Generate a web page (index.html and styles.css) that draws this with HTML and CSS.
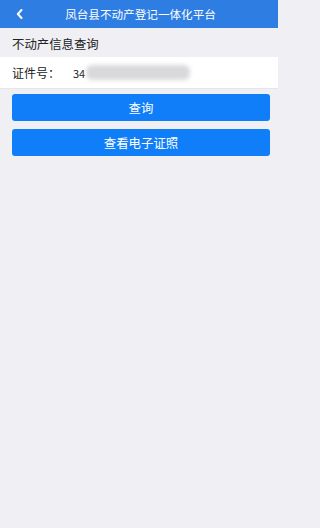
FILE: index.html
```html
<!DOCTYPE html>
<html lang="zh-CN">
<head>
<meta charset="utf-8">
<meta name="viewport" content="width=278">
<title>凤台县不动产登记一体化平台</title>
<link rel="stylesheet" href="styles.css">
</head>
<body>
<div class="page">
  <header class="topbar">
    <span class="back"><svg width="7" height="10" viewBox="0 0 7 10"><path d="M5.5 1 L1.8 5 L5.5 9" fill="none" stroke="#fff" stroke-width="2" stroke-linecap="round" stroke-linejoin="round"/></svg></span>
    <h1 class="title">凤台县不动产登记一体化平台</h1>
  </header>
  <div class="section-title">不动产信息查询</div>
  <div class="field">
    <span class="label">证件号：</span>
    <span class="value">34</span>
    <span class="mask"></span>
  </div>
  <div class="actions">
    <button class="btn">查询</button>
    <button class="btn">查看电子证照</button>
  </div>
</div>
</body>
</html>
```
FILE: styles.css
```css
html, body {
  margin: 0;
  padding: 0;
  background: #efeff4;
  font-family: "Noto Sans CJK SC", "Noto Sans", sans-serif;
  height: 100%;
}
.page {
  width: 278px;
  min-height: 528px;
  background: #efeff4;
}
.topbar {
  height: 28px;
  background: #2e7de3;
  display: flex;
  align-items: center;
  justify-content: center;
  position: relative;
}
.back {
  position: absolute;
  left: 16px;
  top: 9px;
  display: flex;
}
.title {
  margin: 0 0 0 3px;
  font-size: 11.6px;
  font-weight: normal;
  color: #fff;
  line-height: 28px;
}
.section-title {
  padding: 6px 12px 0;
  height: 23px;
  line-height: 20px;
  font-size: 12.4px;
  color: #222;
}
.field {
  height: 31px;
  background: #fff;
  display: flex;
  align-items: center;
  padding-left: 12px;
  font-size: 12px;
  color: #222;
  border-bottom: 1px solid #e6e6ea;
}
.label {
  width: 61px;
}
.value {
  font-size: 11px;
}
.mask {
  width: 104px;
  height: 15px;
  margin-left: 1px;
  background: #d9d9dc;
  border-radius: 6px;
  filter: blur(2px);
}
.actions {
  display: flex;
  flex-direction: column;
  gap: 8px;
  padding: 5px 8px 0 12px;
}
.btn {
  height: 27px;
  border: none;
  border-radius: 3px;
  background: #0f7ef8;
  color: #fff;
  font-family: inherit;
  font-size: 12.4px;
  padding: 0;
}
```
